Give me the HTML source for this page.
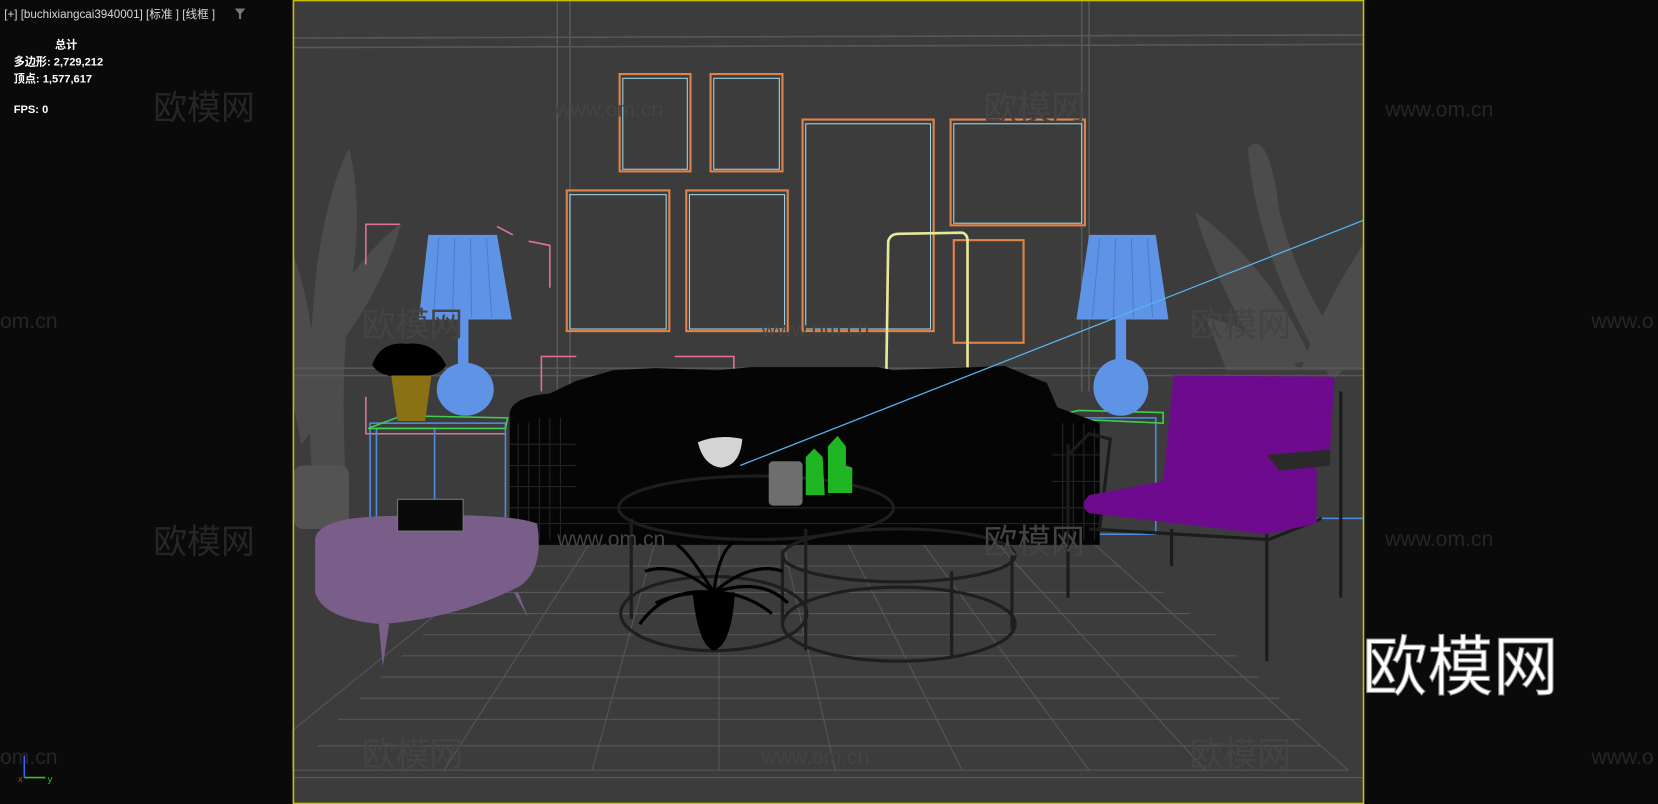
<!DOCTYPE html>
<html><head><meta charset="utf-8"><style>
html,body{margin:0;padding:0;background:#0a0a0a;width:1658px;height:804px;overflow:hidden}
svg{display:block}
text{font-family:"Liberation Sans","Noto Sans CJK SC",sans-serif}
</style></head><body>
<svg width="1658" height="804" viewBox="0 0 1568 760" preserveAspectRatio="none" xmlns="http://www.w3.org/2000/svg">
<rect width="1568" height="760" fill="#0a0a0a"/>
<rect x="277" y="0" width="1013" height="760" fill="#3c3c3c"/>
<g stroke="#575757" stroke-width="1.5" fill="none">
<line x1="277" y1="36" x2="1290" y2="33"/><line x1="277" y1="45" x2="1290" y2="42"/>
<line x1="527" y1="0" x2="527" y2="370"/><line x1="539" y1="0" x2="539" y2="370"/>
<line x1="1023" y1="0" x2="1023" y2="370"/><line x1="1030" y1="0" x2="1030" y2="370"/>
<line x1="277" y1="348" x2="1290" y2="348"/><line x1="277" y1="355" x2="1290" y2="355"/>
</g>
<g stroke="#585858" stroke-width="1" fill="none">
<polygon points="500,510 1030,510 1275,728 277,728 277,690"/>
<line x1="277" y1="735" x2="1290" y2="735"/>
<line x1="440" y1="560" x2="1100" y2="560"/><line x1="400" y1="600" x2="1150" y2="600"/>
<line x1="360" y1="640" x2="1190" y2="640"/><line x1="320" y1="680" x2="1230" y2="680"/>
<line x1="470" y1="535" x2="1060" y2="535"/><line x1="420" y1="580" x2="1125" y2="580"/>
<line x1="380" y1="620" x2="1170" y2="620"/><line x1="340" y1="660" x2="1210" y2="660"/>
<line x1="300" y1="705" x2="1250" y2="705"/>
<line x1="560" y1="510" x2="420" y2="728"/><line x1="620" y1="510" x2="560" y2="728"/>
<line x1="680" y1="510" x2="680" y2="728"/><line x1="740" y1="510" x2="790" y2="728"/>
<line x1="800" y1="510" x2="910" y2="728"/><line x1="870" y1="510" x2="1030" y2="728"/>
<line x1="940" y1="510" x2="1140" y2="728"/>
</g>
<g fill="#5a5a5a" opacity="0.55">
<path d="M300,500 Q285,380 300,250 Q310,180 330,140 Q345,200 330,280 Q320,380 330,500Z"/>
<path d="M290,330 Q330,250 380,210 Q360,280 310,340Z"/>
<path d="M277,240 Q300,300 300,400 L285,420 L277,380Z"/>
<rect x="278" y="440" width="52" height="60" rx="8" fill="#666"/>
<path d="M1260,360 Q1190,250 1180,140 Q1200,120 1210,200 Q1230,280 1280,340Z"/>
<path d="M1130,200 Q1200,250 1240,340 L1200,350 Q1150,270 1130,200Z"/>
<path d="M1290,230 Q1250,290 1230,350 L1290,350Z"/>
<path d="M1140,300 Q1190,310 1230,350 L1160,350Z"/>
</g>
<g fill="none" stroke="#e0834a" stroke-width="2">
<rect x="586" y="70" width="67" height="92"/><rect x="672" y="70" width="68" height="92"/>
<rect x="759" y="113" width="124" height="200"/><rect x="899" y="113" width="127" height="100"/>
<rect x="536" y="180" width="97" height="133"/><rect x="649" y="180" width="96" height="133"/>
<rect x="902" y="227" width="66" height="97"/>
</g>
<g fill="none" stroke="#9fd8e8" stroke-width="1">
<rect x="589" y="74" width="61" height="86"/><rect x="675" y="74" width="62" height="86"/>
<rect x="762" y="117" width="118" height="194"/><rect x="902" y="117" width="121" height="94"/>
<rect x="539" y="184" width="91" height="127"/><rect x="652" y="184" width="90" height="127"/>
</g>
<path d="M838,370 L840,228 Q842,221 850,221 L910,220 Q915,221 915,228 L915,350" fill="none" stroke="#e6e89a" stroke-width="2.5"/>
<g fill="none" stroke="#e0709a" stroke-width="1.5">
<path d="M346,250 L346,212 L378,212"/><path d="M470,214 L485,222"/><path d="M500,228 L520,232 L520,272"/>
<path d="M512,370 L512,337 L545,337"/><path d="M638,337 L694,337 L694,360"/>
<path d="M346,375 L346,410 L478,410"/>
</g>
<g fill="none" stroke="#4d8ce0" stroke-width="1.5">
<rect x="350" y="400" width="128" height="100"/><rect x="356" y="405" width="55" height="95"/>
<rect x="993" y="395" width="100" height="110"/>
<line x1="1210" y1="490" x2="1290" y2="490"/>
</g>
<polygon points="348,405 380,393 480,395 478,405" fill="none" stroke="#3ed04a" stroke-width="1.5"/>
<polygon points="990,395 1020,388 1100,390 1100,400" fill="none" stroke="#3ed04a" stroke-width="1.5"/>
<g fill="#5e93e6">
<polygon points="405,222 470,222 484,302 396,302"/><rect x="433" y="302" width="10" height="48"/>
<ellipse cx="440" cy="368" rx="27" ry="25"/>
<polygon points="1030,222 1093,222 1105,302 1018,302"/><rect x="1055" y="302" width="10" height="45"/>
<ellipse cx="1060" cy="366" rx="26" ry="27"/>
</g>
<g stroke="#3f6fb8" stroke-width="1" opacity="0.6">
<line x1="415" y1="225" x2="410" y2="300"/><line x1="430" y1="225" x2="428" y2="300"/><line x1="445" y1="225" x2="446" y2="300"/><line x1="460" y1="225" x2="465" y2="300"/>
<line x1="1040" y1="225" x2="1033" y2="300"/><line x1="1055" y1="225" x2="1053" y2="300"/><line x1="1070" y1="225" x2="1072" y2="300"/><line x1="1085" y1="225" x2="1090" y2="300"/>
</g>
<path d="M352,345 Q360,322 385,325 Q410,322 422,345 Q415,358 385,356 Q360,358 352,345Z" fill="#000"/>
<polygon points="370,355 408,355 402,398 376,398" fill="#8a7214"/>
<path d="M482,390 Q485,375 520,372 L545,360 L580,350 L620,348 L680,350 L710,347 L830,347 L845,350 L950,346 L990,362 L1000,385 L1040,400 L1040,515 L482,515Z" fill="#050505"/>
<g stroke="#2a2a2a" stroke-width="1" opacity="0.9">
<line x1="490" y1="400" x2="490" y2="510"/><line x1="500" y1="400" x2="500" y2="510"/><line x1="510" y1="395" x2="510" y2="510"/><line x1="520" y1="395" x2="520" y2="510"/><line x1="530" y1="395" x2="530" y2="510"/>
<line x1="1005" y1="400" x2="1005" y2="510"/><line x1="1015" y1="400" x2="1015" y2="510"/><line x1="1025" y1="400" x2="1025" y2="510"/><line x1="1035" y1="405" x2="1035" y2="510"/>
<line x1="482" y1="420" x2="545" y2="420"/><line x1="482" y1="440" x2="545" y2="440"/><line x1="482" y1="460" x2="545" y2="460"/><line x1="482" y1="480" x2="1040" y2="480"/><line x1="482" y1="495" x2="1040" y2="495"/>
<line x1="995" y1="430" x2="1040" y2="430"/><line x1="995" y1="455" x2="1040" y2="455"/>
</g>
<line x1="700" y1="440" x2="1290" y2="208" stroke="#57b4f0" stroke-width="1.2"/>
<g fill="none" stroke="#1e1e1e" stroke-width="3">
<ellipse cx="715" cy="480" rx="130" ry="30"/>
<ellipse cx="850" cy="525" rx="110" ry="25"/>
<ellipse cx="850" cy="590" rx="110" ry="35"/>
<ellipse cx="675" cy="580" rx="88" ry="35"/>
<line x1="597" y1="490" x2="597" y2="585"/><line x1="762" y1="500" x2="762" y2="615"/>
<line x1="740" y1="520" x2="740" y2="590"/><line x1="957" y1="525" x2="957" y2="595"/>
<line x1="900" y1="540" x2="900" y2="620"/>
</g>
<path d="M660,418 Q680,410 702,415 Q700,440 682,442 Q665,440 660,418Z" fill="#d4d4d4"/>
<rect x="727" y="436" width="32" height="42" rx="4" fill="#6e6e6e"/>
<path d="M762,432 L770,424 L778,432 L780,468 L762,468Z" fill="#1fb523"/>
<path d="M783,422 L792,412 L800,422 L800,440 L806,442 L806,466 L783,466Z" fill="#1fb523"/>
<path d="M655,560 Q660,610 675,615 Q692,610 695,560Z" fill="#000"/>
<g stroke="#000" stroke-width="3" fill="none">
<path d="M675,560 Q640,530 610,540"/><path d="M675,560 Q650,520 640,515"/><path d="M675,560 Q680,520 695,512"/>
<path d="M675,560 Q710,530 740,540"/><path d="M675,560 Q720,545 745,570"/><path d="M675,560 Q630,555 605,590"/>
<path d="M675,560 Q640,560 620,570"/><path d="M675,560 Q705,560 730,580"/>
</g>
<path d="M298,510 Q300,490 360,488 Q480,484 508,495 Q515,540 490,555 Q430,585 360,590 Q305,585 298,560Z" fill="#7a5e8a"/>
<path d="M358,588 L368,590 L362,630 Z" fill="#7a5e8a"/><path d="M486,560 L500,585 L490,560Z" fill="#7a5e8a"/>
<rect x="376" y="472" width="62" height="30" fill="#0a0a0a" stroke="#777" stroke-width="1"/>
<g stroke="#1c1c1c" stroke-width="3" fill="none">
<path d="M1010,430 L1030,410 L1050,415 L1040,500"/><line x1="1010" y1="420" x2="1010" y2="565"/>
<line x1="1108" y1="500" x2="1108" y2="535"/><line x1="1198" y1="445" x2="1198" y2="625"/>
<line x1="1268" y1="370" x2="1268" y2="565"/>
<path d="M1030,500 L1200,510 L1250,490"/>
</g>
<path d="M1110,355 L1262,356 L1258,425 L1225,430 L1245,440 L1245,495 L1198,505 L1030,485 Q1020,478 1030,468 L1100,455Z" fill="#6e0a8e"/>
<path d="M1198,430 L1258,425 L1258,440 L1210,445Z" fill="#2a2a2a"/>
<g fill="#444" font-size="26">
<text x="145" y="113" font-size="32" fill="#262626">欧模网</text>
<text x="525" y="110" font-size="20">www.om.cn</text>
<text x="930" y="113" font-size="32">欧模网</text>
<text x="1310" y="110" font-size="20" fill="#262626">www.om.cn</text>
<text x="0" y="310" font-size="20" fill="#262626">om.cn</text>
<text x="342" y="318" font-size="32">欧模网</text>
<text x="720" y="318" font-size="20">www.om.cn</text>
<text x="1125" y="318" font-size="32">欧模网</text>
<text x="1505" y="310" font-size="20" fill="#262626">www.o</text>
<text x="145" y="523" font-size="32" fill="#262626">欧模网</text>
<text x="527" y="516" font-size="20">www.om.cn</text>
<text x="930" y="523" font-size="32">欧模网</text>
<text x="1310" y="516" font-size="20" fill="#262626">www.om.cn</text>
<text x="0" y="722" font-size="20" fill="#262626">om.cn</text>
<text x="342" y="724" font-size="32">欧模网</text>
<text x="720" y="722" font-size="20">www.om.cn</text>
<text x="1125" y="724" font-size="32">欧模网</text>
<text x="1505" y="722" font-size="20" fill="#262626">www.o</text>
</g>
<text x="1288" y="652" font-size="62" fill="#fff" stroke="#888" stroke-width="1">欧模网</text>
<rect x="277.5" y="0.5" width="1012" height="759" fill="none" stroke="#c8c000" stroke-width="1.5"/>
<g fill="#d8d8d8" font-size="11">
<text x="4" y="17">[+]  [buchixiangcai3940001]  [标准 ]  [线框 ]</text>
<polygon points="222,8 232,8 228,13 228,18 226,18 226,13" fill="#777"/>
<text x="52" y="46" font-weight="bold" font-size="10.5" fill="#fff">总计</text>
<text x="13" y="62" font-weight="bold" font-size="10.5" fill="#fff">多边形: 2,729,212</text>
<text x="13" y="78" font-weight="bold" font-size="10.5" fill="#fff">顶点:    1,577,617</text>
<text x="13" y="107" font-weight="bold" font-size="10.5" fill="#fff">FPS:       0</text>
</g>
<line x1="23" y1="714" x2="23" y2="735" stroke="#4060ff" stroke-width="1.5"/>
<line x1="23" y1="735" x2="43" y2="735" stroke="#30c030" stroke-width="1.5"/>
<text x="45" y="739" font-size="9" fill="#30c030">y</text>
<text x="17" y="739" font-size="9" fill="#d03030">x</text>
</svg>
</body></html>
